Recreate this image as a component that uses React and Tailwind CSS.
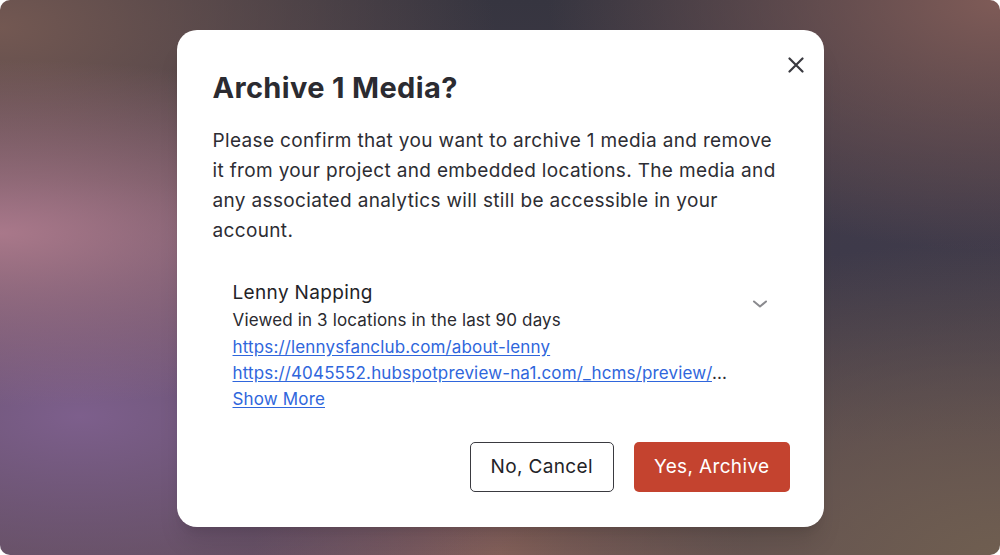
import React from "react"

// Fond flouté derrière la modale
const BACKDROP =
  "bg-[radial-gradient(ellipse_at_0%_42%,#a9788a_0%,transparent_38%),radial-gradient(ellipse_at_8%_75%,#7d5f8c_0%,transparent_40%),radial-gradient(ellipse_at_0%_5%,#735852_0%,transparent_35%),radial-gradient(ellipse_at_100%_0%,#7f5b57_0%,transparent_32%),radial-gradient(ellipse_at_100%_100%,#6f5e50_0%,transparent_40%),radial-gradient(ellipse_at_50%_100%,#86605a_0%,transparent_35%),radial-gradient(ellipse_at_85%_45%,#3e3a4a_0%,transparent_45%),linear-gradient(180deg,#363540_0%,#4a3f4c_60%,#5c4a52_100%)]"

const Chevron = () => (
  <svg width="16" height="16" viewBox="0 0 16 16" fill="none" className="shrink-0 mt-[17px] ml-6">
    <path d="M2 5.5l6 5 6-5" stroke="#8a8a8e" strokeWidth="2" strokeLinecap="round" strokeLinejoin="round" />
  </svg>
)

const CloseIcon = () => (
  <svg width="16" height="16" viewBox="0 0 16 16" fill="none">
    <path d="M1.5 1.5l13 13M14.5 1.5l-13 13" stroke="#3a3a40" strokeWidth="2.2" strokeLinecap="round" />
  </svg>
)

const linkClass = "text-[#2f66dc] underline underline-offset-2"

export default function App() {
  return (
    <div className={`w-full h-[555px] rounded-[10px] overflow-hidden flex justify-center pt-[30px] font-[Inter,sans-serif] ${BACKDROP}`}>
      <div className="relative w-[647px] h-[497px] bg-white rounded-[20px] shadow-xl px-9 pt-[40px] pb-[35px] flex flex-col">
        <button className="absolute top-[27px] right-[20px] p-0">
          <CloseIcon />
        </button>

        <h2 className="text-[29px] leading-[36px] tracking-[0.35px] font-bold text-[#2b2b31]">Archive 1 Media?</h2>

        <p className="mt-[20px] text-[19px] leading-[30px] tracking-[0.35px] text-[#2d2d33]">
          Please confirm that you want to archive 1 media and remove it from your project and embedded locations. The
          media and any associated analytics will still be accessible in your account.
        </p>

        <div className="mt-[17px] px-5 pt-4 flex">
          <div className="flex-1 min-w-0 text-[17px] leading-[26px] tracking-[0.15px] text-[#2a2a30]">
            <div className="text-[19px] leading-[28px] tracking-[0.35px] text-[#232327]">Lenny Napping</div>
            <div>Viewed in 3 locations in the last 90 days</div>
            <div className="mt-[1px]">
              <a href="#" className={linkClass}>
                https://lennysfanclub.com/about-lenny
              </a>
            </div>
            <div className="whitespace-nowrap">
              <a href="#" className={linkClass}>
                https://4045552.hubspotpreview-na1.com/_hcms/preview/
              </a>
              <span>...</span>
            </div>
            <div>
              <a href="#" className={linkClass}>
                Show More
              </a>
            </div>
          </div>
          <Chevron />
        </div>

        <div className="mt-auto flex justify-end gap-5 -mr-[2px]">
          <button className="h-[50px] px-5 rounded-[5px] border border-[#3a3a40] bg-white text-[19px] tracking-[0.35px] text-[#232327]">
            No, Cancel
          </button>
          <button className="h-[50px] px-5 rounded-[5px] bg-[#c4432f] text-[19px] tracking-[0.35px] text-white">
            Yes, Archive
          </button>
        </div>
      </div>
    </div>
  )
}
